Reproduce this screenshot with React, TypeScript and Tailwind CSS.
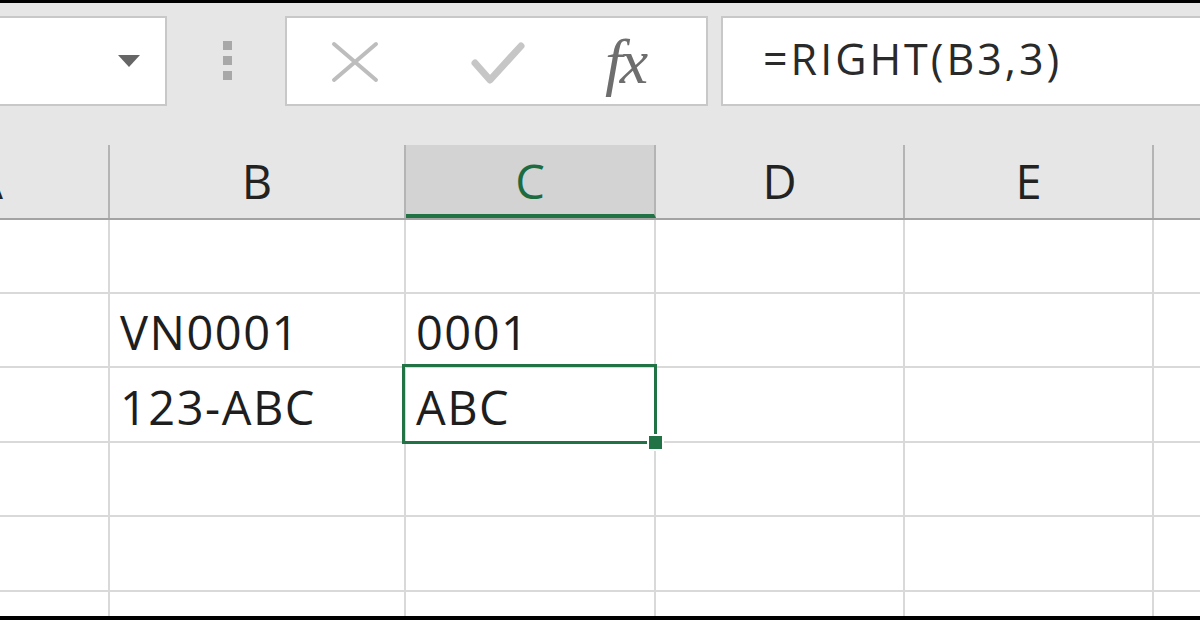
import React from "react";

// Vista de hoja de cálculo con barra de fórmulas
const FONT = { fontFamily: '"Open Sans", "Noto Sans", sans-serif' };

// F no muestra letra: queda fuera de la ventana
const columns = [
  { key: "A", label: "A", width: "w-[242px] -ml-[132px]", active: false },
  { key: "B", label: "B", width: "w-[296px]", active: false },
  { key: "C", label: "C", width: "w-[250px]", active: true },
  { key: "D", label: "D", width: "w-[249px]", active: false },
  { key: "E", label: "E", width: "w-[249px]", active: false },
  { key: "F", label: "", width: "w-[249px]", active: false },
];

const rows: { h: string; cells: Record<string, string> }[] = [
  { h: "h-[74px]", cells: {} },
  { h: "h-[74px]", cells: { B: "VN0001", C: "0001" } },
  { h: "h-[75px]", cells: { B: "123-ABC", C: "ABC" } },
  { h: "h-[74px]", cells: {} },
  { h: "h-[75px]", cells: {} },
  { h: "h-[24px]", cells: {} },
];

const CancelIcon = () => (
  <svg width="48" height="42" viewBox="0 0 48 42">
    <path d="M3 3 L45 39 M45 3 L3 39" stroke="#bdbdbd" strokeWidth="4" strokeLinecap="round" fill="none" />
  </svg>
);

const CheckIcon = () => (
  <svg width="54" height="44" viewBox="0 0 54 44">
    <path d="M4 22 L19 39 L50 5" stroke="#c6c6c6" strokeWidth="7" strokeLinecap="round" strokeLinejoin="round" fill="none" />
  </svg>
);

const FormulaBar = () => (
  <div className="flex items-start h-[142px] bg-[#e6e6e6] pt-[13px]">
    {/* cuadro de nombres */}
    <div className="-ml-[2px] w-[169px] h-[90px] bg-white border-2 border-[#c8c8c8] flex items-center justify-end pr-[25px]">
      <div className="w-0 h-0 border-l-[11px] border-r-[11px] border-t-[12px] border-l-transparent border-r-transparent border-t-[#666666]" />
    </div>
    {/* separador de puntos */}
    <div className="ml-[56px] mt-[25px] flex flex-col gap-[6px]">
      <div className="w-[9px] h-[9px] bg-[#a8a8a8]" />
      <div className="w-[9px] h-[9px] bg-[#a8a8a8]" />
      <div className="w-[9px] h-[9px] bg-[#a8a8a8]" />
    </div>
    {/* botones cancelar / aceptar / fx */}
    <div className="ml-[53px] w-[423px] h-[90px] bg-white border-2 border-[#c8c8c8] flex items-center">
      <div className="ml-[44px] mt-[2px]"><CancelIcon /></div>
      <div className="ml-[92px] mt-[4px]"><CheckIcon /></div>
      <div
        className="ml-[80px] mt-[2px] text-[#6e6e6e] italic text-[64px] leading-none tracking-[-3px]"
        style={{ fontFamily: '"Liberation Serif", "DejaVu Serif", serif' }}
      >
        fx
      </div>
    </div>
    {/* entrada de fórmula */}
    <div className="ml-[13px] flex-1 h-[90px] bg-white border-2 border-r-0 border-[#c8c8c8] flex items-center pl-[40px]">
      <span className="text-[43px] text-[#2a2a2a] leading-none tracking-[3px] -mt-[6px]" style={FONT}>
        =RIGHT(B3,3)
      </span>
    </div>
  </div>
);

const HeaderRow = () => (
  <div className="flex h-[75px] border-b-2 border-[#a3a3a3] overflow-hidden">
    {columns.map((c) => (
      <div
        key={c.key}
        className={`${c.width} shrink-0 flex items-center justify-center border-r-2 border-[#b4b4b4] ${
          c.active ? "bg-[#d3d3d3] border-b-4 border-b-[#217346] pt-[4px]" : "bg-[#e6e6e6]"
        }`}
      >
        {c.label && (
          <span className={`text-[47px] leading-none ${c.active ? "text-[#1d6b40]" : "text-[#222222]"}`} style={FONT}>
            {c.label}
          </span>
        )}
      </div>
    ))}
  </div>
);

export default function App() {
  return (
    <div className="w-[1200px] h-[620px] overflow-hidden bg-white border-t-[3px] border-b-4 border-black flex flex-col">
      <FormulaBar />
      <HeaderRow />
      <div className="flex-1 overflow-hidden">
        {rows.map((r, ri) => (
          <div key={ri} className={`flex ${r.h} ${ri < rows.length - 1 ? "border-b-2 border-[#d9d9d9]" : ""}`}>
            {columns.map((c) => (
              <div
                key={c.key}
                className={`${c.width} shrink-0 relative flex items-end pl-[10px] pb-[10px] border-r-2 border-[#d9d9d9]`}
              >
                {r.cells[c.key] && (
                  <span className="text-[47px] leading-none tracking-[1.5px] text-[#1e1e1e]" style={FONT}>
                    {r.cells[c.key]}
                  </span>
                )}
                {ri === 2 && c.key === "C" && (
                  <div className="absolute -left-[4px] -right-[3px] -top-[4px] -bottom-[3px] border-[3px] border-[#217346] z-10">
                    <div className="absolute -right-[10px] -bottom-[10px] w-[17px] h-[17px] bg-[#217346] border-2 border-white" />
                  </div>
                )}
              </div>
            ))}
          </div>
        ))}
      </div>
    </div>
  );
}
